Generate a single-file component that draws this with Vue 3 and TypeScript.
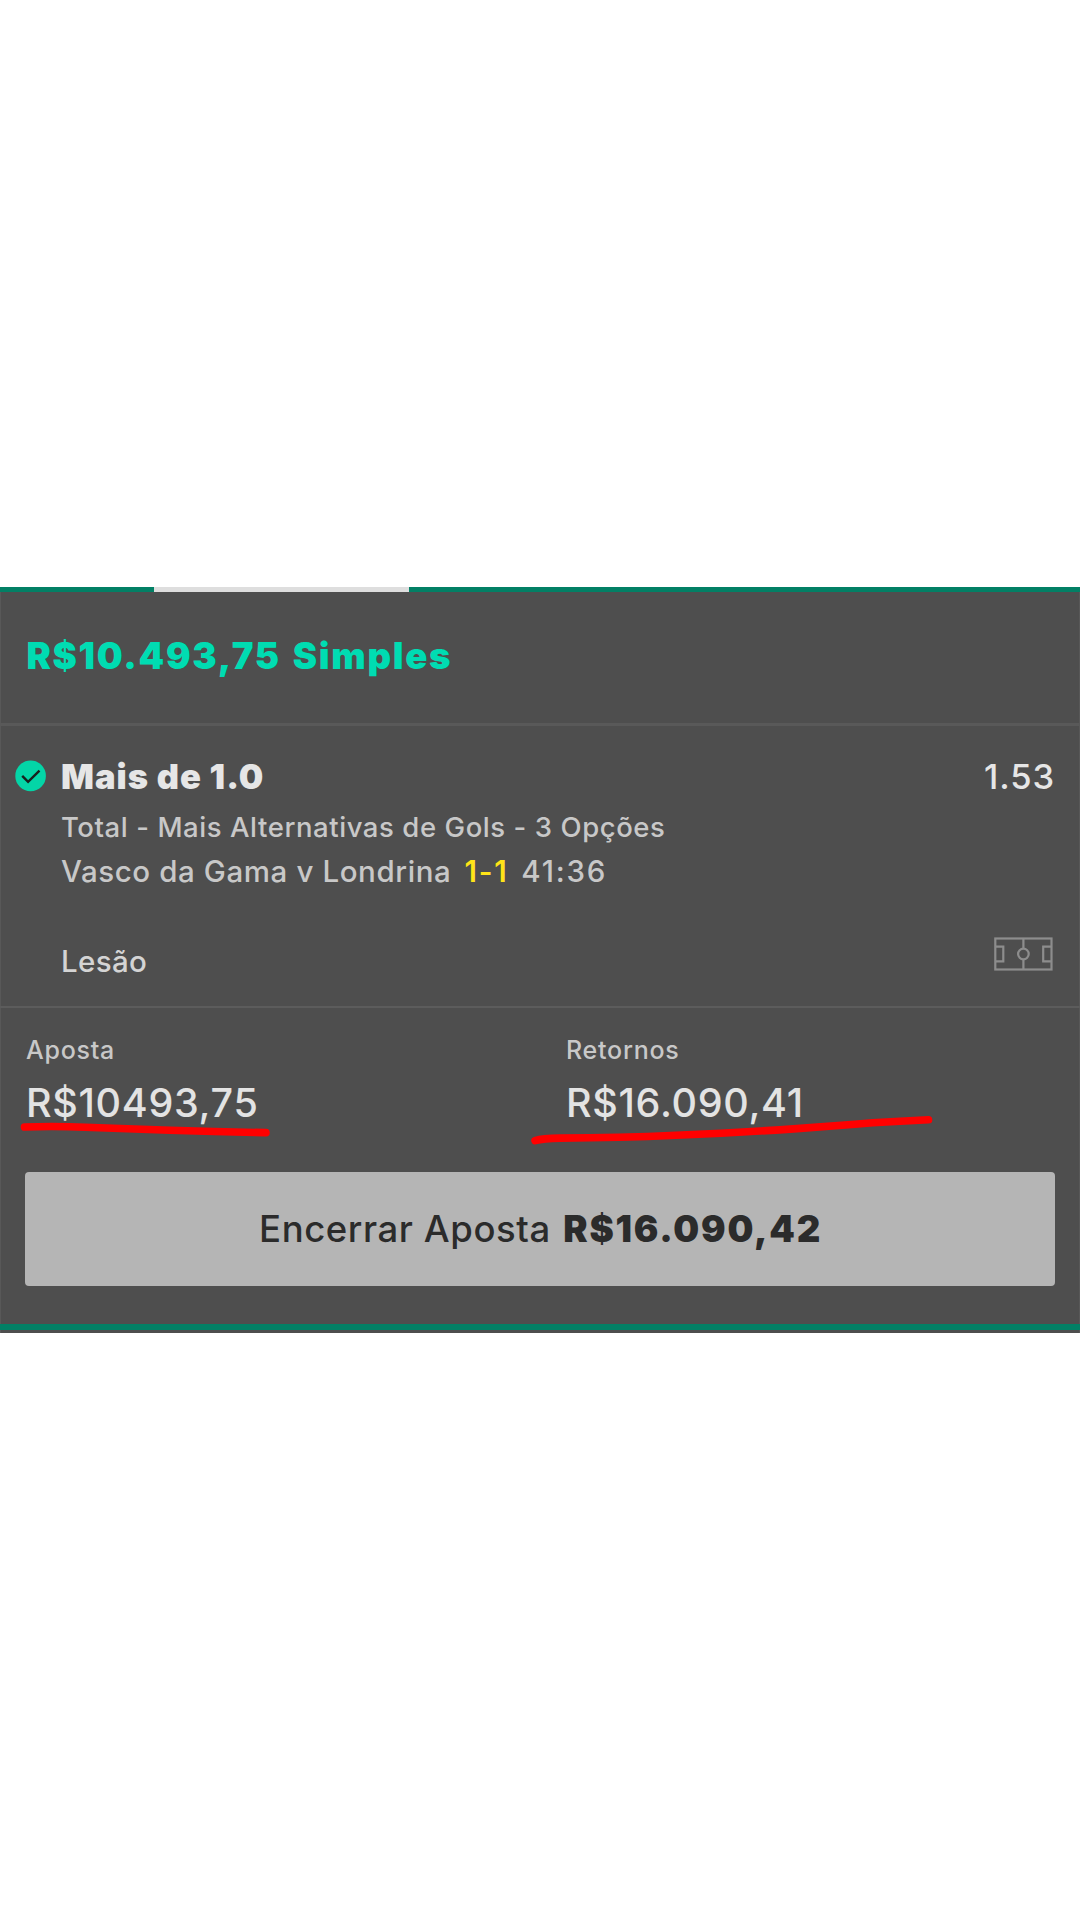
<script setup lang="ts">
interface Amount {
  label: string
  value: string
}

const bet = {
  stake: 'R$10.493,75',
  type: 'Simples',
  pick: 'Mais de 1.0',
  odds: '1.53',
  market: 'Total - Mais Alternativas de Gols - 3 Opções',
  fixture: 'Vasco da Gama v Londrina',
  score: '1-1',
  clock: '41:36',
  status: 'Lesão',
  cashOut: 'R$16.090,42',
}

const amounts: Amount[] = [
  { label: 'Aposta', value: 'R$10493,75' },
  { label: 'Retornos', value: 'R$16.090,41' },
]
</script>

<template>
  <main class="page">
    <section class="card">
      <div class="tabs"><span class="tab-active"></span></div>

      <header class="head">
        <span>{{ bet.stake }}</span>
        <span>{{ bet.type }}</span>
      </header>

      <div class="selection">
        <svg class="check" viewBox="0 0 32 32" aria-hidden="true">
          <circle cx="15.6" cy="15.9" r="15.3" fill="#04d5a7" />
          <path d="M7.2 15.8 13.1 21.9 24.5 10.7" fill="none" stroke="#17211e" stroke-width="2.4" />
        </svg>
        <div class="details">
          <div class="pick-row">
            <span class="pick">{{ bet.pick }}</span>
            <span class="odds">{{ bet.odds }}</span>
          </div>
          <div class="market">{{ bet.market }}</div>
          <div class="fixture">
            <span>{{ bet.fixture }}</span>
            <span class="score">{{ bet.score }}</span>
            <span class="clock">{{ bet.clock }}</span>
          </div>
          <div class="status-row">
            <span class="status">{{ bet.status }}</span>
            <svg class="pitch" viewBox="0 0 59 34" aria-hidden="true">
              <g fill="none" stroke="#8d8d8d" stroke-width="2.2">
                <rect x="1.3" y="1.5" width="56.2" height="31" />
                <path d="M29.4 1.5V11.8M29.4 22.2V32.5M1.3 9.6H9.3V24.4H1.3M57.5 9.6H49.2V24.4H57.5" />
                <circle cx="29.4" cy="17" r="5.3" />
              </g>
            </svg>
          </div>
        </div>
      </div>

      <div class="amounts">
        <div v-for="a in amounts" :key="a.label" class="amount">
          <div class="label">{{ a.label }}</div>
          <div class="value">{{ a.value }}</div>
        </div>
        <svg class="marks" viewBox="0 0 1080 60" aria-hidden="true">
          <g fill="none" stroke="#ff0000" stroke-width="7.6" stroke-linecap="round" stroke-linejoin="round">
            <path d="M24.5 27Q55 25.8 85 27.3L170 30.2Q220 32 266 32.6" />
            <path d="M535 40.7Q543 38.2 560 38.1Q620 37.8 676 35.2Q740 32.7 797 28.6L855 24.2Q890 21.5 928.5 19.8" />
          </g>
        </svg>
      </div>

      <button class="cash-out" type="button">
        <span class="cash-label">Encerrar Aposta</span>
        <span class="cash-value">{{ bet.cashOut }}</span>
      </button>

      <div class="foot"></div>
    </section>
  </main>
</template>

<style>
body {
  margin: 0;
  background: #fff;
}
</style>

<style scoped>
.page {
  box-sizing: border-box;
  width: 1080px;
  height: 1920px;
  padding-top: 587px;
  background: #fff;
  font-family: Inter, 'Liberation Sans', sans-serif;
  font-weight: 500;
  white-space: nowrap;
}
.card {
  height: 746px;
  background: #4e4e4e;
  box-shadow: inset 1px 0 #585858, inset -1px 0 #585858;
}
.tabs {
  height: 5px;
  background: #028065;
}
.tab-active {
  display: block;
  width: 255px;
  height: 5px;
  margin-left: 154px;
  background: #dedede;
}
.head {
  display: flex;
  gap: 12px;
  height: 131px;
  padding-left: 26.5px;
  border-bottom: 3px solid #595959;
  color: #00dcb2;
  font-size: 36.5px;
  font-weight: 900;
  letter-spacing: 1.7px;
  line-height: 129px;
}
.selection {
  box-sizing: border-box;
  display: flex;
  height: 282px;
  padding: 31px 27px 0 15px;
  border-bottom: 2px solid #5c5c5c;
  color: #c8c8c8;
}
.check {
  flex: none;
  width: 32px;
  height: 32px;
  margin: 3px 14px 0 0;
}
.details {
  flex: 1;
}
.pick-row {
  display: flex;
  justify-content: space-between;
  color: #e6e6e6;
  font-size: 34.5px;
  line-height: 40px;
}
.pick {
  font-weight: 900;
  letter-spacing: 0.95px;
}
.odds {
  margin-right: -2px;
  letter-spacing: 0.9px;
}
.market {
  margin-top: 12px;
  font-size: 27.5px;
  letter-spacing: 0.57px;
  line-height: 36px;
}
.fixture {
  display: flex;
  margin-top: 8px;
  font-size: 29.5px;
  letter-spacing: 0.59px;
  line-height: 36px;
}
.score {
  margin-left: 13.2px;
  color: #ffe418;
  font-weight: 600;
  letter-spacing: 1.8px;
}
.clock {
  margin-left: 12.7px;
  letter-spacing: 1.8px;
}
.status-row {
  display: flex;
  align-items: flex-start;
  justify-content: space-between;
  margin-top: 48px;
}
.status {
  margin-top: 6px;
  color: #d4d4d4;
  font-size: 29.5px;
  letter-spacing: 0.34px;
  line-height: 36px;
}
.pitch {
  width: 59px;
  height: 34px;
}
.amounts {
  position: relative;
  display: flex;
  height: 164px;
}
.amount {
  box-sizing: border-box;
  width: 540px;
  padding: 27px 0 0 26px;
}
.label {
  color: #c8c8c8;
  font-size: 25px;
  letter-spacing: 0.75px;
  line-height: 30px;
}
.value {
  margin-top: 16px;
  color: #e3e3e3;
  font-size: 39.5px;
  letter-spacing: 0.7px;
  line-height: 44px;
}
.marks {
  position: absolute;
  top: 92px;
  left: 0;
  width: 1080px;
  height: 60px;
}
.cash-out {
  display: flex;
  align-items: center;
  justify-content: center;
  gap: 12.5px;
  width: 1029.5px;
  height: 114px;
  margin: 0 25.3px;
  padding: 0 0 0 1px;
  border: 0;
  border-radius: 4px;
  background: #b5b5b5;
  color: #2b2b2b;
  font: inherit;
  font-size: 36.5px;
  line-height: 44px;
}
.cash-label {
  letter-spacing: 0.58px;
}
.cash-value {
  font-weight: 900;
  letter-spacing: 1.75px;
}
.foot {
  height: 6px;
  margin-top: 38px;
  background: #028065;
}
</style>
